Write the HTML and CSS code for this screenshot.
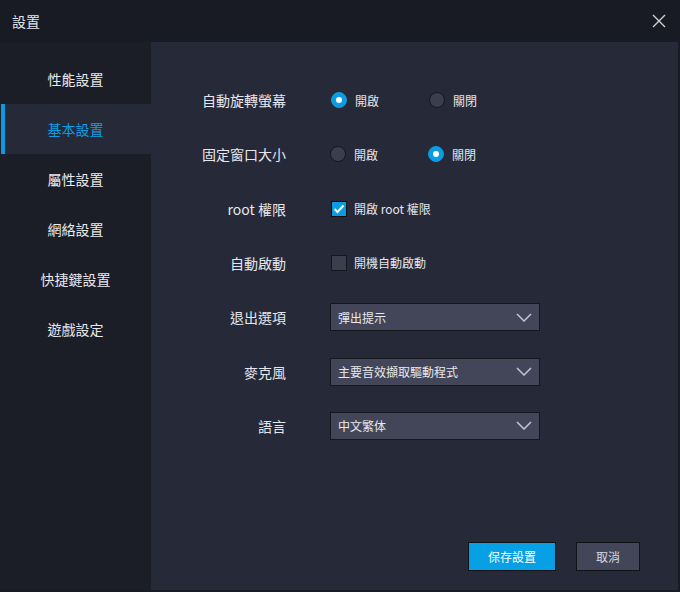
FILE: index.html
```html
<!DOCTYPE html>
<html lang="zh-Hant">
<head>
<meta charset="utf-8">
<link rel="stylesheet" href="styles.css">
</head>
<body>
<div class="window">
  <header class="titlebar">
    <span class="title">設置</span>
    <svg class="close" width="14" height="14" viewBox="0 0 14 14"><path d="M1 1L13 13M13 1L1 13" stroke="#cfd0d8" stroke-width="1.4" fill="none"/></svg>
  </header>
  <div class="body">
    <nav class="sidebar">
      <div class="nav-item">性能設置</div>
      <div class="nav-item active">基本設置</div>
      <div class="nav-item">屬性設置</div>
      <div class="nav-item">網絡設置</div>
      <div class="nav-item">快捷鍵設置</div>
      <div class="nav-item">遊戲設定</div>
    </nav>
    <main class="main">
      <div class="form">
        <div class="label">自動旋轉螢幕</div>
        <div class="control">
          <span class="opt"><span class="radio on"></span>開啟</span>
          <span class="opt"><span class="radio"></span>關閉</span>
        </div>
        <div class="label">固定窗口大小</div>
        <div class="control shift">
          <span class="opt"><span class="radio"></span>開啟</span>
          <span class="opt"><span class="radio on"></span>關閉</span>
        </div>
        <div class="label">root 權限</div>
        <div class="control">
          <span class="opt check-opt"><span class="check on"><svg width="12" height="10" viewBox="0 0 12 10"><path d="M1.5 5L4.5 8L10.5 1.5" stroke="#fff" stroke-width="2" fill="none"/></svg></span>開啟 root 權限</span>
        </div>
        <div class="label">自動啟動</div>
        <div class="control">
          <span class="opt check-opt"><span class="check"></span>開機自動啟動</span>
        </div>
        <div class="label">退出選項</div>
        <div class="control">
          <div class="select"><span>彈出提示</span><svg width="16" height="9" viewBox="0 0 16 9"><path d="M1 1L8 8L15 1" stroke="#c4c6d2" stroke-width="1.5" fill="none"/></svg></div>
        </div>
        <div class="label">麥克風</div>
        <div class="control">
          <div class="select"><span>主要音效擷取驅動程式</span><svg width="16" height="9" viewBox="0 0 16 9"><path d="M1 1L8 8L15 1" stroke="#c4c6d2" stroke-width="1.5" fill="none"/></svg></div>
        </div>
        <div class="label">語言</div>
        <div class="control">
          <div class="select"><span>中文繁体</span><svg width="16" height="9" viewBox="0 0 16 9"><path d="M1 1L8 8L15 1" stroke="#c4c6d2" stroke-width="1.5" fill="none"/></svg></div>
        </div>
      </div>
      <div class="footer">
        <button class="btn primary">保存設置</button>
        <button class="btn">取消</button>
      </div>
    </main>
  </div>
</div>
</body>
</html>
```
FILE: styles.css
```css
* { box-sizing: border-box; }
html, body { margin: 0; padding: 0; }
body {
  width: 680px;
  height: 592px;
  overflow: hidden;
  background: #181b24;
  font-family: "Noto Sans CJK TC", "Noto Sans", sans-serif;
  color: #e4e5ea;
}
.window {
  width: 680px;
  height: 592px;
  display: flex;
  flex-direction: column;
  background: #181b24;
  padding: 0 2px 2px 0;
}
.titlebar {
  height: 42px;
  flex: none;
  display: flex;
  align-items: center;
  justify-content: space-between;
  padding: 0 12px 0 12px;
}
.title {
  font-size: 14px;
  color: #e2e3ea;
  line-height: 1;
  margin-top: -1px;
}
.body {
  flex: 1;
  display: flex;
  min-height: 0;
}
.sidebar {
  width: 151px;
  flex: none;
  background: #1c1e27;
  padding-top: 12px;
}
.nav-item {
  height: 50px;
  display: flex;
  align-items: center;
  justify-content: center;
  font-size: 14px;
  color: #e8e9ee;
  border-left: 5px solid transparent;
  padding-right: 5px;
}
.nav-item.active {
  background: #262938;
  color: #0d9ee3;
  border-left: 4px solid #0a9ae0;
  margin-left: 1px;
}
.main {
  flex: 1;
  background: #262938;
  display: flex;
  flex-direction: column;
  padding: 44px 38px 19px 0;
}
.form {
  display: grid;
  grid-template-columns: 135px auto;
  column-gap: 44px;
  row-gap: 26.33px;
  grid-auto-rows: 28px;
  align-items: center;
}
.label {
  text-align: right;
  font-size: 14px;
  color: #e6e7ec;
  white-space: nowrap;
}
.control {
  display: flex;
  align-items: center;
  font-size: 12px;
  color: #e4e5ea;
  padding-left: 1px;
}
.control.shift { padding-left: 0; }
.opt {
  display: flex;
  align-items: center;
  gap: 8px;
  width: 98px;
  white-space: nowrap;
}
.check-opt { width: auto; gap: 7px; }
.radio {
  width: 16px;
  height: 16px;
  border-radius: 50%;
  background: #3b3e4d;
  border: 1px solid #15171e;
  display: inline-flex;
  align-items: center;
  justify-content: center;
}
.radio.on {
  background: #0c9ce2;
  border-color: #0c9ce2;
}
.radio.on::after {
  content: "";
  width: 6px;
  height: 6px;
  border-radius: 50%;
  background: #ffffff;
}
.check {
  width: 16px;
  height: 16px;
  background: #3b3e4d;
  border: 1px solid #15171e;
  display: inline-flex;
  align-items: center;
  justify-content: center;
}
.check.on {
  background: #0c9ce2;
  border-color: #0b0d12;
}
.select {
  width: 210px;
  height: 28px;
  background: #434659;
  border: 1px solid #15171e;
  display: flex;
  align-items: center;
  justify-content: space-between;
  padding: 0 7px 0 7px;
  font-size: 12px;
  color: #e8e9ee;
  margin-left: -1px;
}
.footer {
  margin-top: auto;
  display: flex;
  justify-content: flex-end;
  gap: 20px;
}
.btn {
  height: 29px;
  width: 64px;
  background: #434659;
  border: 1px solid #101218;
  color: #d8d9e0;
  font-family: "Noto Sans CJK TC", "Noto Sans", sans-serif;
  font-size: 12px;
  padding: 0;
}
.btn.primary {
  width: 88px;
  background: #07a0e4;
  color: #ffffff;
}
```
